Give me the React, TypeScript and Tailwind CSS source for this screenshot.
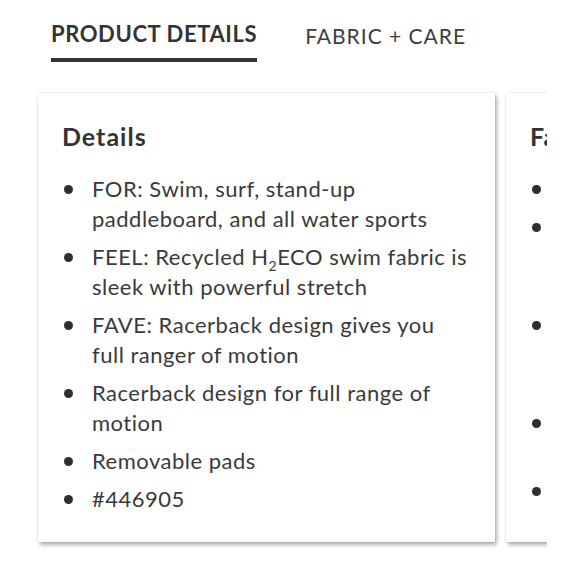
export default function App() {
  const details = [
    <>FOR: Swim, surf, stand-up paddleboard, and all water sports</>,
    <>
      FEEL: Recycled H<sub className="text-[14px] align-[-2px] leading-none">2</sub>ECO swim fabric is sleek with
      powerful stretch
    </>,
    <>FAVE: Racerback design gives you full ranger of motion</>,
    <>Racerback design for full range of motion</>,
    <>Removable pads</>,
    <>#446905</>,
  ]

  const fabric = [
    "Recycled nylon and spandex",
    "Chlorine-resistant fabric holds its shape and color through season after season of wear",
    "UPF 50+ sun protection helps block harmful rays while you spend long days in the water",
    "Hand wash cold with mild detergent, lay flat to dry",
    "Imported",
  ]

  const bullets = (items: React.ReactNode[]) => (
    <ul className="mt-[22px] flex flex-col gap-2 pl-[26px] pr-[24px]">
      {items.map((item, i) => (
        <li key={i} className="flex gap-[19px] text-[22px] leading-[30px] tracking-[0.5px] text-[#3a3a3a]">
          <span className="flex h-[30px] shrink-0 items-center">
            <span className="h-[9px] w-[9px] rounded-full bg-[#2e2e2e]" />
          </span>
          <span>{item}</span>
        </li>
      ))}
    </ul>
  )

  return (
    <div className="h-[580px] w-[580px] bg-white font-['Lato','Liberation_Sans',sans-serif] text-[#333]">
      {/* tabs */}
      <div className="flex gap-[48px] pl-[51px] pt-5">
        <div className="border-b-4 border-[#333] pb-2 text-[22px] leading-[28px] font-bold tracking-[0.6px]">
          PRODUCT DETAILS
        </div>
        <div className="border-b-4 border-transparent pb-2 pt-[2px] text-[21px] leading-[28px] tracking-[1px] text-[#3d3d3d]">
          FABRIC + CARE
        </div>
      </div>

      {/* cards */}
      <div className="mt-[23px] ml-[28px] w-[519px] overflow-hidden py-2 pl-[10px]">
        <div className="flex gap-[11px]">
          <div className="h-[449px] w-[457px] shrink-0 bg-white pt-[27px] shadow-[2px_3px_4px_rgba(0,0,0,0.3),0_0_2px_rgba(0,0,0,0.15)]">
            <h3 className="pl-6 text-[25px] leading-[32px] font-bold tracking-[1px] text-[#333]">Details</h3>
            {bullets(details)}
          </div>
          <div className="h-[449px] w-[457px] shrink-0 bg-white pt-[27px] shadow-[2px_3px_4px_rgba(0,0,0,0.3),0_0_2px_rgba(0,0,0,0.15)]">
            <h3 className="pl-6 text-[25px] leading-[32px] font-bold tracking-[1px] text-[#333]">Fabric + Care</h3>
            {bullets(fabric)}
          </div>
        </div>
      </div>
    </div>
  )
}
